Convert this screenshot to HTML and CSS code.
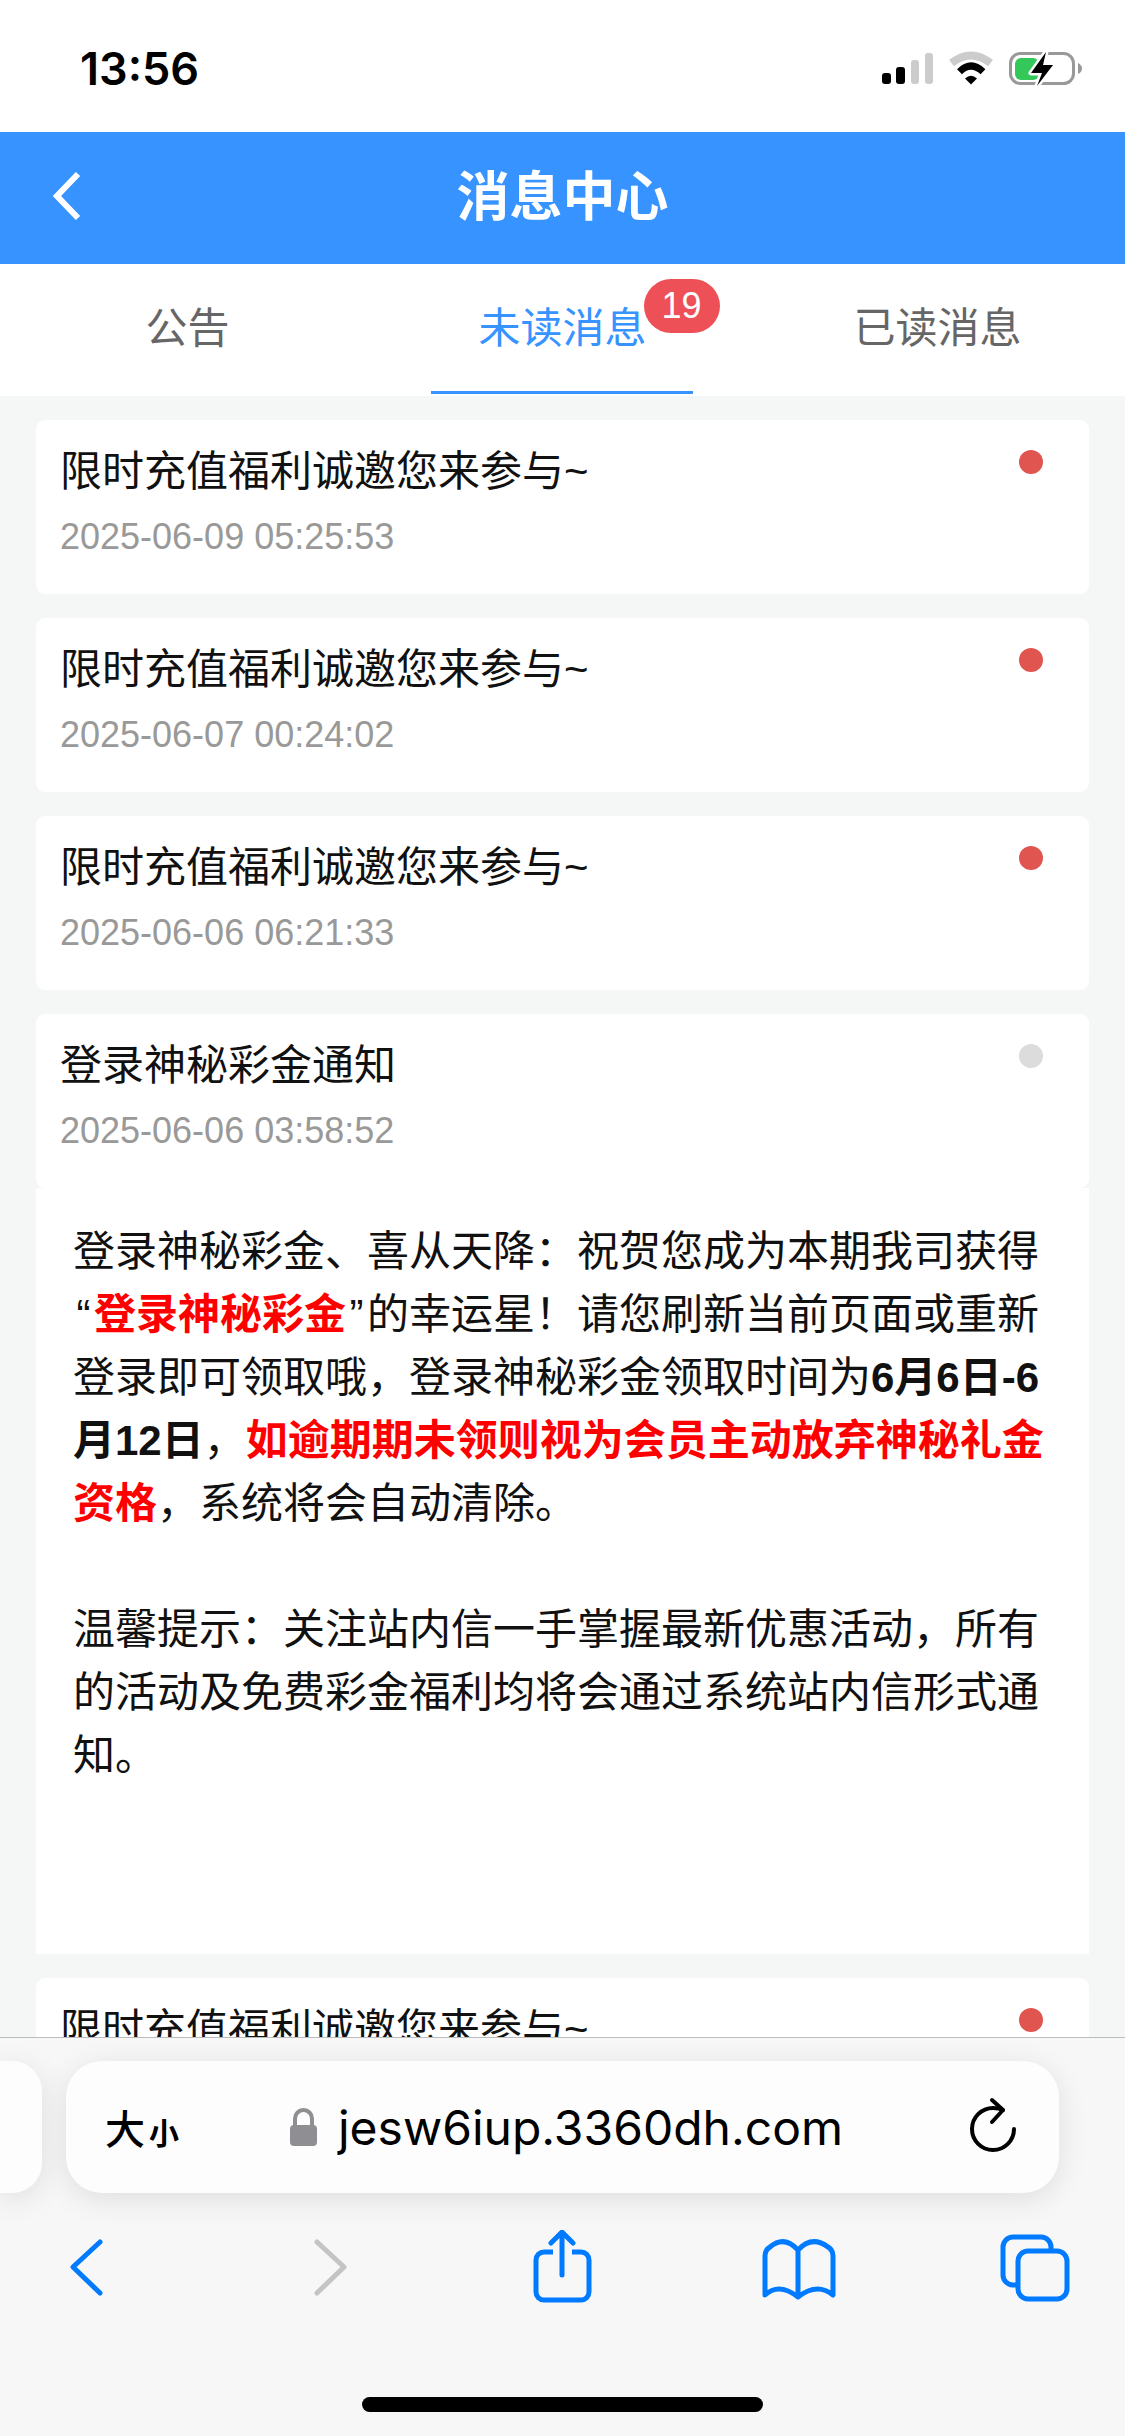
FILE: index.html
```html
<!DOCTYPE html>
<html lang="zh-CN">
<head>
  <meta charset="UTF-8">
  <meta name="viewport" content="width=device-width, initial-scale=1.0">
  <title>消息中心</title>
  <link rel="stylesheet" href="styles.css">
</head>
<body>
  <div class="status-bar">
    <span class="status-time">13:56</span>
    <svg class="status-icons" width="204" height="38" viewBox="0 0 204 38">
      <rect x="2" y="23" width="9" height="11" rx="3" fill="#000"/>
      <rect x="16" y="17" width="9" height="17" rx="3" fill="#000"/>
      <rect x="31" y="10" width="8" height="24" rx="3" fill="#ccc"/>
      <rect x="45" y="3" width="8" height="31" rx="3" fill="#ccc"/>
      <path d="M71.5 13Q91 -2 110.5 13" fill="none" stroke="#ccc" stroke-width="8"/>
      <path d="M79.5 21.7Q91 10.3 103 21.7" fill="none" stroke="#000" stroke-width="7"/>
      <path d="M85 28.5Q91 23 97 28.5L91 34.5Z" fill="#000"/>
      <rect x="130.5" y="3.5" width="63" height="30" rx="10" fill="none" stroke="#999" stroke-width="3"/>
      <path d="M198 13Q202 15 202 18.500Q202 22 198 24Z" fill="#999"/>
      <rect x="135" y="8" width="24" height="22" rx="6" fill="#34c759"/>
      <path d="M166 2L151 23H162L157 36L173 15H163Z" fill="#000" stroke="#fff" stroke-width="5" paint-order="stroke" stroke-linejoin="round"/>
    </svg>
  </div>

  <header class="nav-bar">
    <svg class="nav-back" width="32" height="52" viewBox="0 0 32 52">
      <path d="M25 4L4 26L25 48" fill="none" stroke="#fff" stroke-width="6"/>
    </svg>
    <h1 class="nav-title">消息中心</h1>
  </header>

  <nav class="tabs">
    <div class="tab">公告</div>
    <div class="tab active">
      <span class="tab-label">未读消息<span class="badge">19</span></span>
    </div>
    <div class="tab">已读消息</div>
  </nav>

  <main class="message-list">
    <div class="message">
      <div>
        <div class="message-title">限时充值福利诚邀您来参与~</div>
        <div class="message-date">2025-06-09 05:25:53</div>
      </div>
      <span class="dot"></span>
    </div>
    <div class="message">
      <div>
        <div class="message-title">限时充值福利诚邀您来参与~</div>
        <div class="message-date">2025-06-07 00:24:02</div>
      </div>
      <span class="dot"></span>
    </div>
    <div class="message">
      <div>
        <div class="message-title">限时充值福利诚邀您来参与~</div>
        <div class="message-date">2025-06-06 06:21:33</div>
      </div>
      <span class="dot"></span>
    </div>
    <div class="message-open">
      <div class="message">
        <div>
          <div class="message-title">登录神秘彩金通知</div>
          <div class="message-date">2025-06-06 03:58:52</div>
        </div>
        <span class="dot read"></span>
      </div>
      <div class="message-body">
        <p>登录神秘彩金、喜从天降：祝贺您成为本期我司获得<span class="quote">“</span><strong class="red">登录神秘彩金</strong><span class="quote">”</span>的幸运星！请您刷新当前页面或重新登录即可领取哦，登录神秘彩金领取时间为<strong>6月6日-6月12日</strong>，<strong class="red">如逾期期未领则视为会员主动放弃神秘礼金资格</strong>，系统将会自动清除。</p>
        <p>温馨提示：关注站内信一手掌握最新优惠活动，所有的活动及免费彩金福利均将会通过系统站内信形式通知。</p>
      </div>
    </div>
    <div class="message">
      <div>
        <div class="message-title">限时充值福利诚邀您来参与~</div>
      </div>
      <span class="dot"></span>
    </div>
  </main>

  <footer class="browser-bar">
    <div class="address-row">
      <div class="prev-tab"></div>
      <div class="address">
        <span class="text-size"><span class="big">大</span><span class="small">小</span></span>
        <span class="site">
          <svg width="27" height="38" viewBox="0 0 27 38">
            <path d="M5 18V10.500a8.500 8.500 0 0 1 17 0V18" fill="none" stroke="#8e8e93" stroke-width="4"/>
            <rect x="0" y="17" width="27" height="21" rx="4" fill="#8e8e93"/>
          </svg>
          <span class="url">jesw6iup.3360dh.com</span>
        </span>
        <svg width="52" height="62" viewBox="0 0 52 62">
          <path d="M48 33A21 21 0 1 1 27 12Q33 12 37 14" fill="none" stroke="#000" stroke-width="4" stroke-linecap="round"/>
          <path d="M26 4L37 14L26 26" fill="none" stroke="#000" stroke-width="4" stroke-linecap="round" stroke-linejoin="round"/>
        </svg>
      </div>
    </div>
    <div class="browser-icons">
      <svg class="icon-back" width="33" height="74" viewBox="0 0 33 74">
        <path d="M30 12L3 37L30 63" fill="none" stroke="#007aff" stroke-width="5" stroke-linecap="round" stroke-linejoin="round"/>
      </svg>
      <svg class="icon-forward" width="33" height="74" viewBox="0 0 33 74">
        <path d="M3 12L30 37L3 63" fill="none" stroke="#c4c4c4" stroke-width="5" stroke-linecap="round" stroke-linejoin="round"/>
      </svg>
      <svg class="icon-share" width="59" height="74" viewBox="0 0 59 74">
        <path d="M20 22H11a8 8 0 0 0-8 8V62a8 8 0 0 0 8 8H48a8 8 0 0 0 8-8V30a8 8 0 0 0-8-8H39" fill="none" stroke="#007aff" stroke-width="5"/>
        <path d="M29 45V3M18 13L29 2L40 13" fill="none" stroke="#007aff" stroke-width="5" stroke-linecap="round" stroke-linejoin="round"/>
      </svg>
      <svg class="icon-book" width="74" height="74" viewBox="0 0 74 74">
        <path d="M3 65Q17 52 36 67Q55 52 71 65V26Q71 20 66 17Q50 5 36 20Q22 5 8 17Q3 20 3 26ZM36 20V67" fill="none" stroke="#007aff" stroke-width="5" stroke-linejoin="round"/>
      </svg>
      <svg class="icon-tabs" width="70" height="74" viewBox="0 0 70 74">
        <path d="M18 55H13a10 10 0 0 1-10-10V17a10 10 0 0 1 10-10H41a10 10 0 0 1 10 10V21" fill="none" stroke="#007aff" stroke-width="5"/>
        <rect x="18" y="21" width="49" height="48" rx="10" fill="none" stroke="#007aff" stroke-width="5"/>
      </svg>
    </div>
    <div class="home-indicator"></div>
  </footer>
</body>
</html>
```

FILE: styles.css
```css
html, body {
  margin: 0;
  height: 100%;
}

body {
  width: 1125px;
  height: 2436px;
  overflow: hidden;
  display: flex;
  flex-direction: column;
  background-color: #f5f7f7;
  font-family: "Liberation Sans", "Noto Sans CJK SC", sans-serif;
  color: #111;
}

.status-bar {
  flex: 0 0 132px;
  height: 132px;
  display: flex;
  justify-content: space-between;
  background-color: white;
  padding: 0 41px 0 80px;
  box-sizing: border-box;
}

.status-time {
  font-family: Inter, sans-serif;
  font-size: 45px;
  font-weight: 600;
  line-height: 120px;
  margin-top: 9px;
  color: black;
}

.status-icons {
  margin-top: 50px;
}

.nav-bar {
  flex: 0 0 132px;
  display: flex;
  align-items: center;
  justify-content: center;
  position: relative;
  background-color: #3693ff;
}

.nav-back {
  position: absolute;
  left: 53px;
  top: 38px;
  width: 32px;
  height: 52px;
}

.nav-title {
  margin: 0 0 10px;
  font-size: 53px;
  font-weight: 700;
  color: white;
}

.tabs {
  flex: 0 0 132px;
  display: grid;
  grid-template-columns: repeat(3, 1fr);
  background-color: white;
}

.tab {
  position: relative;
  text-align: center;
  font-size: 42px;
  line-height: 130px;
  color: #666;
}

.tab.active {
  color: #3693ff;
}

.tab.active::after {
  content: "";
  position: absolute;
  left: 56px;
  bottom: 2px;
  width: 262px;
  height: 3px;
  background-color: #3693ff;
}

.tab-label {
  position: relative;
  display: inline-block;
}

.badge {
  position: absolute;
  left: 100%;
  margin-left: -3px;
  top: 15px;
  width: 76px;
  height: 54px;
  border-radius: 27px;
  background-color: #ee5057;
  color: white;
  font-size: 36px;
  line-height: 54px;
  text-align: center;
}

.message-list {
  flex: 1;
  min-height: 0;
  overflow: hidden;
  display: flex;
  flex-direction: column;
  gap: 24px;
  padding: 24px 36px 0;
}

.message {
  flex: 0 0 174px;
  height: 174px;
  box-sizing: border-box;
  display: flex;
  justify-content: space-between;
  padding: 28px 46px 0 24px;
  background-color: white;
  border-radius: 9px;
}

.message-title {
  font-size: 42px;
  line-height: 48px;
}

.message-date {
  margin-top: 17px;
  font-size: 36px;
  line-height: 48px;
  color: #999;
}

.dot {
  width: 24px;
  height: 24px;
  margin-top: 2px;
  border-radius: 50%;
  background-color: #e05550;
}

.dot.read {
  background-color: #dcdcdc;
}

.message-open {
  flex-shrink: 0;
}

.message-body {
  background-color: white;
  padding: 32px 37px 167px;
  font-size: 42px;
  line-height: 63px;
}

.message-body p {
  margin: 0 0 63px;
}

.message-body p:last-child {
  margin-bottom: 0;
}

.quote {
  display: inline-block;
  width: 21px;
  text-align: center;
}

strong {
  font-weight: 700;
}

.red {
  color: #ff0000;
}

.browser-bar {
  flex: 0 0 399px;
  box-sizing: border-box;
  border-top: 1px solid #bbb;
  background-color: #f7f7f7;
  padding-top: 23px;
  overflow: hidden;
}

.address-row {
  display: flex;
  gap: 24px;
}

.prev-tab {
  flex: 0 0 42px;
  height: 132px;
  background-color: #fdfdfd;
  border-radius: 0 30px 30px 0;
  box-shadow: 0 6px 30px rgba(0, 0, 0, 0.1);
}

.address {
  flex: 0 0 993px;
  height: 132px;
  box-sizing: border-box;
  display: flex;
  align-items: center;
  justify-content: space-between;
  padding: 0 41px 0 39px;
  background-color: #fdfdfd;
  border-radius: 36px;
  box-shadow: 0 6px 30px rgba(0, 0, 0, 0.1);
}

.text-size {
  display: flex;
  align-items: baseline;
  color: black;
}

.text-size .big {
  font-size: 40px;
  font-weight: 500;
}

.text-size .small {
  font-size: 30px;
  font-weight: 700;
  margin-left: 4px;
}

.site {
  display: flex;
  align-items: center;
  gap: 21px;
  margin-right: 12px;
}

.url {
  font-family: Inter, sans-serif;
  font-size: 48px;
  color: black;
}

.browser-icons {
  display: flex;
  height: 74px;
  margin-top: 37px;
}

.icon-back {
  margin-left: 70px;
}

.icon-forward {
  margin-left: 211px;
}

.icon-share {
  margin-left: 186px;
}

.icon-book {
  margin-left: 170px;
}

.icon-tabs {
  margin-left: 164px;
}

.home-indicator {
  width: 401px;
  height: 15px;
  margin: 93px auto 0;
  border-radius: 8px;
  background-color: black;
}
```
